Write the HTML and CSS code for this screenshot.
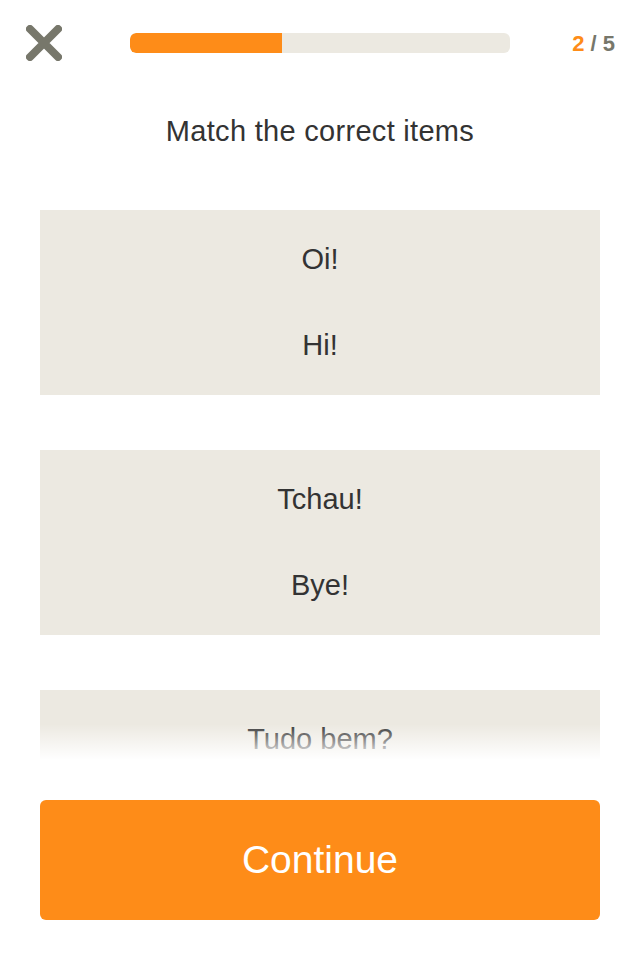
FILE: index.html
```html
<!DOCTYPE html>
<html lang="en">
<head>
<meta charset="utf-8">
<title>Match the correct items</title>
<link rel="stylesheet" href="styles.css">
</head>
<body>
<div class="page">
  <header class="topbar">
    <button class="close" aria-label="Close">
      <svg viewBox="0 0 36 36" width="36" height="36" aria-hidden="true">
        <path d="M4 4 L32 32 M32 4 L4 32" stroke="#77776b" stroke-width="8" stroke-linecap="round" fill="none"/>
      </svg>
    </button>
    <div class="progress"><div class="progress-fill" style="width: 40%"></div></div>
    <div class="count"><span class="count-current">2</span> / 5</div>
  </header>

  <h1 class="title">Match the correct items</h1>

  <div class="scroll">
    <div class="list">
      <div class="card">
        <div class="row">Oi!</div>
        <div class="row">Hi!</div>
      </div>
      <div class="card">
        <div class="row">Tchau!</div>
        <div class="row">Bye!</div>
      </div>
      <div class="card">
        <div class="row">Tudo bem?</div>
      </div>
    </div>
    <div class="fade"></div>
  </div>

  <button class="continue">Continue</button>
</div>
</body>
</html>
```

FILE: styles.css
```css
* { box-sizing: border-box; }

html, body {
  margin: 0;
  padding: 0;
  background: #ffffff;
}

body {
  font-family: "Liberation Sans", Arial, Helvetica, sans-serif;
  color: #333333;
}

.page {
  width: 640px;
  height: 960px;
  display: flex;
  flex-direction: column;
  overflow: hidden;
}

.topbar {
  height: 86px;
  flex: none;
  display: flex;
  align-items: center;
  padding: 0 25px 0 26px;
}

.close {
  width: 36px;
  height: 36px;
  padding: 0;
  margin: 0;
  border: 0;
  background: none;
  display: block;
  flex: none;
}

.close svg { display: block; }

.progress {
  margin-left: 68px;
  width: 380px;
  height: 20px;
  flex: none;
  background: #ece9e1;
  border-radius: 6px;
  overflow: hidden;
}

.progress-fill {
  height: 100%;
  background: #fe8c18;
  border-radius: 6px 0 0 6px;
}

.count {
  flex: 1;
  text-align: right;
  font-size: 22px;
  font-weight: bold;
  color: #77776b;
  white-space: pre;
  padding-top: 1px;
}

.count-current { color: #fe8c18; }

.title {
  margin: 25px 0 0;
  height: 40px;
  line-height: 40px;
  text-align: center;
  font-size: 29px;
  font-weight: normal;
  letter-spacing: 0.3px;
  color: #333333;
  flex: none;
}

.scroll {
  position: relative;
  height: 609px;
  flex: none;
  overflow: hidden;
}

.list {
  padding: 59px 40px 0;
  display: flex;
  flex-direction: column;
  gap: 55px;
}

.card {
  background: #ece9e1;
  height: 185px;
  padding: 6px 0 7px;
  display: flex;
  flex-direction: column;
  flex: none;
}

.row {
  height: 86px;
  line-height: 86px;
  text-align: center;
  font-size: 29px;
  color: #333333;
}

.fade {
  position: absolute;
  left: 0;
  right: 0;
  bottom: 0;
  height: 36px;
  background: linear-gradient(to bottom, rgba(255,255,255,0) 0%, rgba(255,255,255,1) 100%);
}

.continue {
  margin: 40px 40px 40px;
  height: 120px;
  flex: none;
  border: 0;
  border-radius: 6px;
  background: #fe8c18;
  color: #ffffff;
  font-family: "Liberation Sans", Arial, Helvetica, sans-serif;
  font-size: 39px;
}
```
